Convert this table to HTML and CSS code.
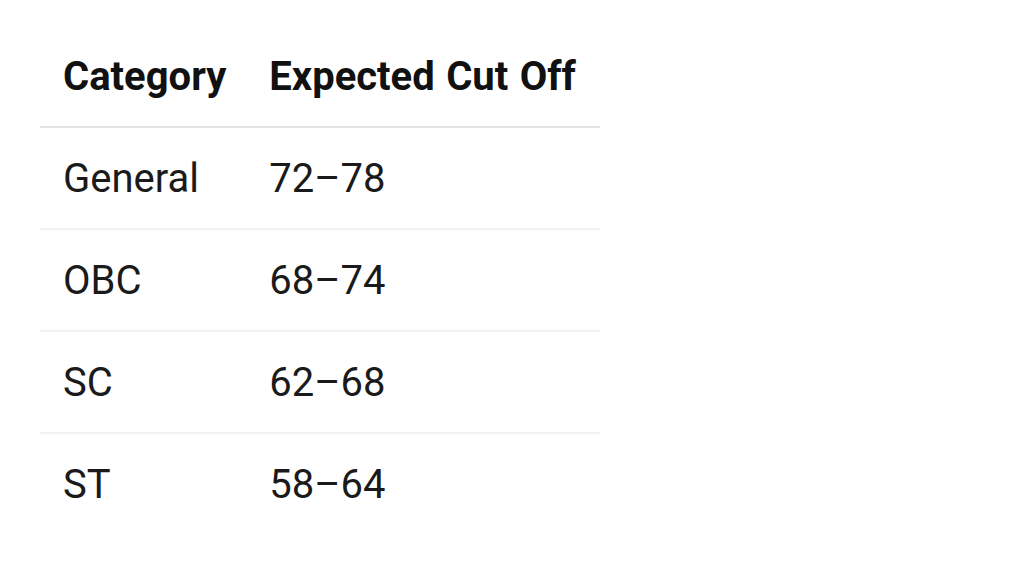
FILE: index.html
```html
<!DOCTYPE html>
<html>
<head>
<meta charset="utf-8">
<link rel="stylesheet" href="styles.css">
</head>
<body>
<table class="cutoff">
  <thead>
    <tr><th>Category</th><th>Expected Cut Off</th></tr>
  </thead>
  <tbody>
    <tr><td>General</td><td>72–78</td></tr>
    <tr><td>OBC</td><td>68–74</td></tr>
    <tr><td>SC</td><td>62–68</td></tr>
    <tr><td>ST</td><td>58–64</td></tr>
  </tbody>
</table>
</body>
</html>
```
FILE: styles.css
```css
html, body {
  margin: 0;
  background: #ffffff;
}
body {
  font-family: Roboto, "Liberation Sans", sans-serif;
  color: #1a1a1a;
}
.cutoff {
  border-collapse: collapse;
  margin: 26px 0 0 40px;
}
.cutoff th,
.cutoff td {
  font-size: 40px;
  line-height: 48px;
  padding: 27px 20px 25px 23px;
  text-align: left;
  white-space: nowrap;
}
.cutoff th:last-child,
.cutoff td:last-child {
  padding-right: 24px;
}
.cutoff th {
  font-weight: 700;
  color: #111111;
  word-spacing: 1.5px;
  border-bottom: 2px solid #e4e4e4;
}
.cutoff td {
  font-weight: 400;
}
.cutoff tbody tr + tr td {
  border-top: 2px solid #f2f2f2;
}
```
